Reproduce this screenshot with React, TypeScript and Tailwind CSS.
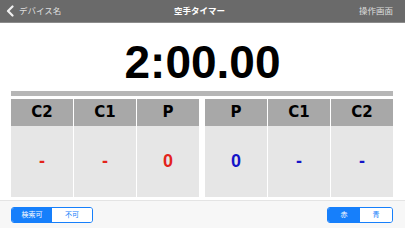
import React from 'react';

const font = { fontFamily: '"Liberation Sans", "Noto Sans CJK JP", sans-serif' };

type Cell = { label: string; value: string; color: 'red' | 'blue' };

const leftCells: Cell[] = [
  { label: 'C2', value: '-', color: 'red' },
  { label: 'C1', value: '-', color: 'red' },
  { label: 'P', value: '0', color: 'red' },
];

const rightCells: Cell[] = [
  { label: 'P', value: '0', color: 'blue' },
  { label: 'C1', value: '-', color: 'blue' },
  { label: 'C2', value: '-', color: 'blue' },
];

const ScoreTable: React.FC<{ cells: Cell[] }> = ({ cells }) => (
  <div className="grid flex-1 grid-cols-3 gap-x-px">
    {cells.map((c, i) => (
      <div key={i} className="flex flex-col">
        <div className="flex h-[27px] items-center justify-center bg-[#a8a8a8] font-['DejaVu_Sans',sans-serif] text-[15px] font-bold text-black">
          {c.label}
        </div>
        <div
          className={
            'flex h-[71px] items-center justify-center bg-[#e6e6e6] text-[18px] font-bold ' +
            (c.color === 'red' ? 'text-[#e3231b]' : 'text-[#1414c8]')
          }
        >
          {c.value}
        </div>
      </div>
    ))}
  </div>
);

const Segment: React.FC<{ items: string[]; width: string }> = ({ items, width }) => (
  <div className={`flex h-[16px] overflow-hidden rounded-[3px] border border-[#167ffb] ${width}`}>
    {items.map((t, i) => (
      <div
        key={t}
        className={
          'flex flex-1 items-center justify-center text-[7px] ' +
          (i === 0 ? 'bg-[#167ffb] text-white' : 'bg-white text-[#167ffb]')
        }
      >
        {t}
      </div>
    ))}
  </div>
);

const App: React.FC = () => {
  return (
    <div className="flex h-[228px] w-[405px] flex-col overflow-hidden bg-white" style={font}>
      {/* ナビゲーションバー */}
      <div className="grid h-[23px] grid-cols-3 items-center border-b border-[#8c8c8c] bg-[#6a6a6a] pl-[6px] pr-[12px]">
        <div className="flex items-center gap-[5px] text-[#dedede]">
          <svg width="8" height="12" viewBox="0 0 8 12" fill="none">
            <path d="M6.5 1.5L2 6L6.5 10.5" stroke="#f0f0f0" strokeWidth="2.2" strokeLinecap="round" strokeLinejoin="round" />
          </svg>
          <span className="text-[8.5px]">デバイス名</span>
        </div>
        <div className="text-center text-[8.5px] font-bold text-white">空手タイマー</div>
        <div className="text-right text-[8.5px] text-[#dedede]">操作画面</div>
      </div>

      {/* タイマー */}
      <div className="flex h-[68px] justify-center pt-[16px]">
        <span className="text-[46px] font-bold leading-none text-black">2:00.00</span>
      </div>

      <div className="ml-[11px] mr-[12px] h-[5px] bg-[#b6b6b6]" />

      {/* スコア */}
      <div className="mt-[3px] flex gap-[6px] pl-[11px] pr-[12px]">
        <ScoreTable cells={leftCells} />
        <ScoreTable cells={rightCells} />
      </div>

      {/* 下部ツールバー */}
      <div className="mt-[3px] flex flex-1 items-start justify-between border-t border-[#e4e4e4] bg-[#f7f7f7] pl-[11px] pr-[12px] pt-[6px]">
        <Segment items={['検索可', '不可']} width="w-[82px]" />
        <Segment items={['赤', '青']} width="w-[66px]" />
      </div>
    </div>
  );
};

export default App;
